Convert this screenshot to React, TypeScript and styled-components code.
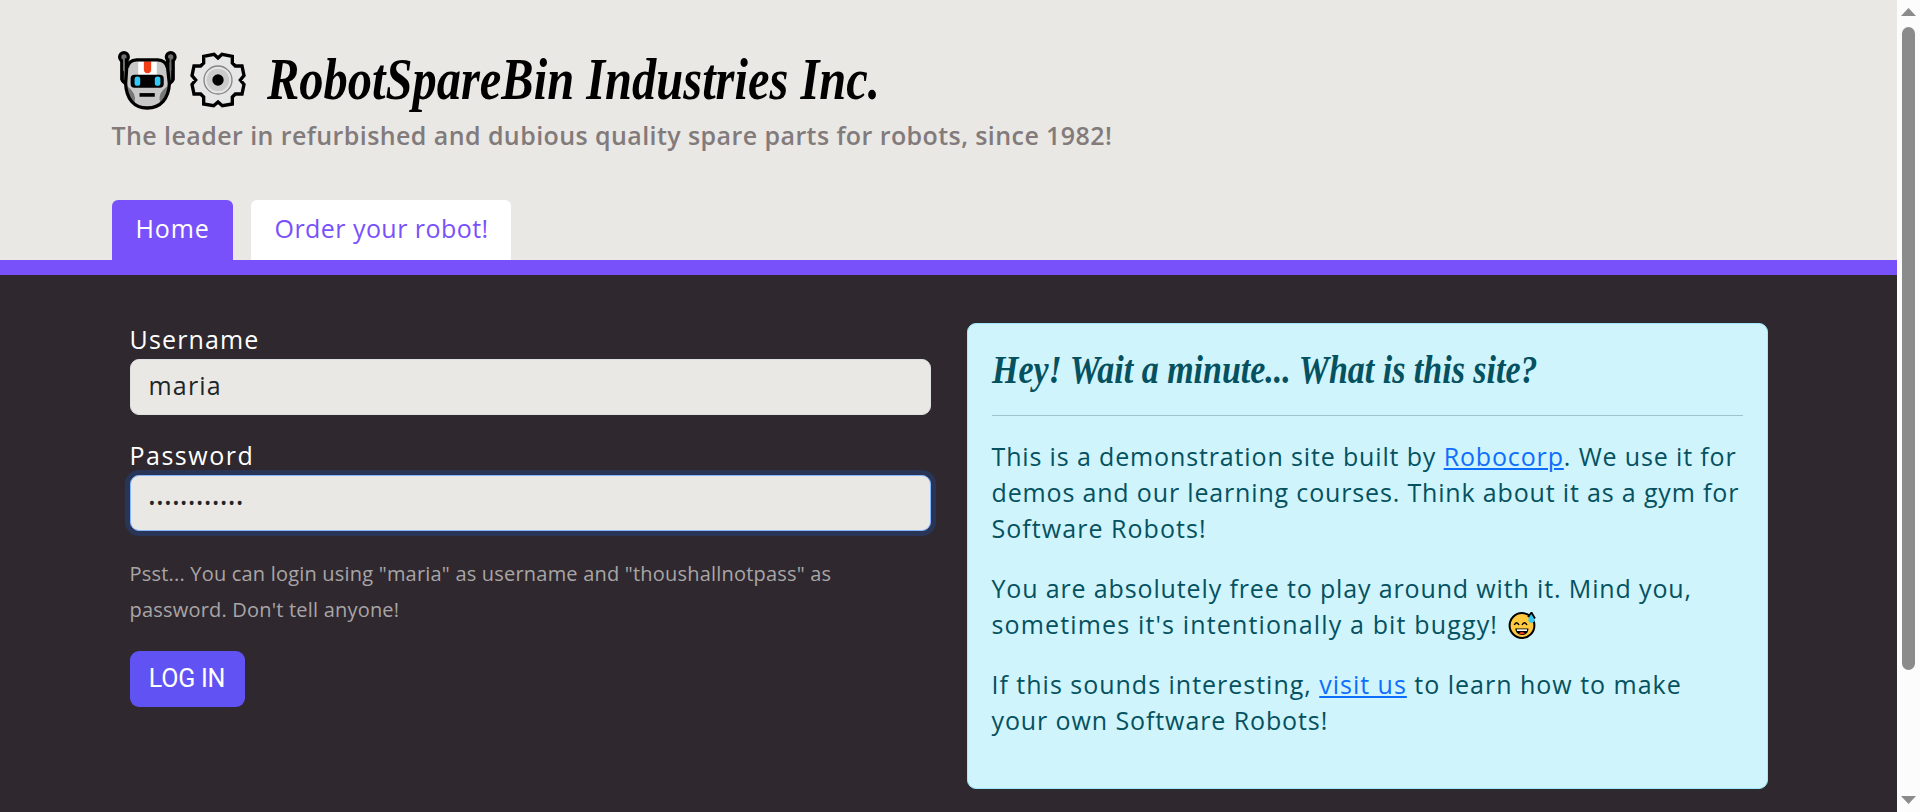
import React from "react";
import styled, { createGlobalStyle } from "styled-components";

const GlobalStyle = createGlobalStyle`
  *, *::before, *::after { box-sizing: border-box; }
  body {
    margin: 0;
    overflow: hidden;
    background: #2f282e;
    font-family: "Open Sans", "Noto Sans", sans-serif;
    font-size: 25px;
    line-height: 36px;
  }
`;

const Window = styled.div`
  display: grid;
  grid-template-columns: 1fr 23px;
  height: 812px;
  overflow: hidden;
`;

const Page = styled.div`
  background: #2f282e;
`;

const Container = styled.div`
  width: 1674px;
  margin: 0 auto;
`;

const Header = styled.header`
  height: 275px;
  padding-top: 50px;
  background: #e9e8e4;
  border-bottom: 15px solid #7851fb;
`;

const Brand = styled.div`
  display: flex;
  align-items: center;
  height: 60px;
  padding-left: 6px;

  svg { flex: none; }
  svg + svg { margin-left: 13px; }
`;

const Title = styled.h1`
  margin: -3px 0 0 21px;
  font: italic 700 60px/60px "Liberation Serif", serif;
  color: #000;
  white-space: nowrap;
  transform: scaleX(0.808);
  transform-origin: left center;
`;

const Tagline = styled.p<{ $spacing: number }>`
  margin: 7px 0 47px;
  font-weight: 600;
  color: #827a7b;
  white-space: nowrap;
  letter-spacing: ${(p) => p.$spacing}px;
`;

const Tabs = styled.nav`
  display: flex;
  gap: 18px;
`;

const Tab = styled.a<{ $active?: boolean; $width: number; $spacing: number }>`
  display: flex;
  align-items: center;
  width: ${(p) => p.$width}px;
  height: 60px;
  padding: 0 0 4px 24px;
  border-radius: 6px 6px 0 0;
  background: ${(p) => (p.$active ? "#7851fb" : "#fff")};
  color: ${(p) => (p.$active ? "#fff" : "#7851fb")};
  letter-spacing: ${(p) => p.$spacing}px;
  white-space: nowrap;
`;

const Main = styled(Container).attrs({ as: "main" })`
  display: grid;
  grid-template-columns: 801px 801px;
  gap: 36px;
  padding: 48px 18px 0;
  align-items: start;
`;

const Form = styled.form`
  display: flex;
  flex-direction: column;
  align-items: flex-start;
  gap: 24px;
`;

const Field = styled.div`
  width: 100%;
`;

const Label = styled.label<{ $spacing: number }>`
  display: block;
  height: 36px;
  line-height: 32px;
  color: #fff;
  letter-spacing: ${(p) => p.$spacing}px;
`;

const Input = styled.input<{ $focused?: boolean }>`
  display: block;
  width: 100%;
  height: 56px;
  padding: 7px 18px 11px;
  border: 1px solid ${(p) => (p.$focused ? "#86b7fe" : "#dfe0e0")};
  border-radius: 9px;
  outline: none;
  background: #e9e8e4;
  box-shadow: ${(p) => (p.$focused ? "0 0 0 5px #283556" : "none")};
  color: #212529;
  font: 400 25px "Open Sans", sans-serif;
  letter-spacing: 1.2px;

  &[type="password"] {
    padding: 9px 18px 10px;
    font-size: 18px;
    letter-spacing: 1.2px;
  }
`;

const Hint = styled.p`
  margin: 0;
  padding-top: 1px;
  margin-bottom: -1px;
  color: #a9a5a7;
  font-size: 20px;
  white-space: nowrap;
  letter-spacing: 0.2px;
`;

const Button = styled.button`
  width: 115px;
  height: 56px;
  padding: 0 0 2px;
  border: 0;
  border-radius: 9px;
  background: #6153f3;
  color: #fff;
  font: 400 25px Roboto, sans-serif;
  letter-spacing: -0.2px;
  white-space: nowrap;
`;

const Alert = styled.section`
  height: 466px;
  padding: 24px;
  border: 1px solid #9eeaf9;
  border-radius: 9px;
  background: #cff4fc;
  color: #055160;
`;

const AlertTitle = styled.h4`
  width: max-content;
  margin: 0;
  font: italic 700 39px/43px "Liberation Serif", serif;
  white-space: nowrap;
  transform: scaleX(0.871);
  transform-origin: left center;
`;

const Rule = styled.hr`
  height: 1px;
  margin: 24px 0 22px;
  border: 0;
  background: #9dc5cd;
`;

const Paragraph = styled.p`
  margin: 0 0 24px;
`;

const Line = styled.span<{ $spacing: number }>`
  display: block;
  height: 36px;
  white-space: nowrap;
  letter-spacing: ${(p) => p.$spacing}px;

  svg {
    margin-left: 2px;
    vertical-align: -5px;
  }
`;

const Link = styled.a`
  color: #0d6efd;
  text-decoration: underline;
  text-decoration-thickness: 2px;
  text-underline-offset: 2px;
`;

const Scrollbar = styled.div`
  display: flex;
  flex-direction: column;
  align-items: center;
  padding: 8px 0;
  background: #fcfcfc;
`;

const Thumb = styled.div`
  width: 13px;
  height: 643px;
  margin: 11px 0 auto;
  border-radius: 7px;
  background: #8b8b8b;
`;

const Arrow = styled.svg`
  display: block;
  flex: none;
  width: 15px;
  height: 8px;
  fill: #8b8b8b;
`;

const RobotIcon = () => (
  <svg width="59" height="59" viewBox="0 0 178 178">
    <path d="M19 8C8 8 4 20 10 29V86Q12 92 24 98L34 38L29 22Q27 8 19 8Z" fill="#707070" />
    <path d="M159 8C170 8 174 20 168 29V86Q166 92 154 98L144 38L149 22Q151 8 159 8Z" fill="#707070" />
    <path d="M12 29V86Q13 91 22 97M166 29V86Q165 91 156 97" fill="none" stroke="#000" strokeWidth="11" />
    <circle cx="18" cy="18" r="13" fill="#707070" stroke="#000" strokeWidth="10" />
    <circle cx="159" cy="18" r="13" fill="#707070" stroke="#000" strokeWidth="10" />
    <path d="M15 22H21V60H15ZM155 22H161V60H155Z" fill="#707070" />
    <path d="M27 54Q30 29 56 27H120Q147 29 150 54L155 98C153 143 129 172 88 172C48 172 25 144 22 98Z" fill="#c8c8c8" />
    <path d="M28 98V120Q33 142 50 154Q57 128 28 106ZM149 98V120Q144 142 127 154Q118 128 149 106Z" fill="#777" />
    <path d="M61 31H117V72H61Z" fill="#fff" />
    <path d="M78 31H100V56Q100 67 89 67Q78 67 78 56Z" fill="#f03e17" />
    <path d="M26 22V54L23 98C25 144 48 172 88 172C129 172 153 143 155 98L150 54V22M28 50Q32 28 56 27H120Q144 28 149 50" fill="none" stroke="#000" strokeWidth="10" strokeLinejoin="round" />
    <rect x="38" y="72" width="100" height="39" rx="12" />
    <rect x="50" y="77" width="17" height="28" rx="8" fill="#31c9f8" />
    <rect x="111" y="77" width="17" height="28" rx="8" fill="#31c9f8" />
    <rect x="65" y="127" width="46" height="11" />
  </svg>
);

const GearIcon = () => (
  <svg width="56" height="56" viewBox="0 0 168 168">
    <path
      d="M72 7L84 18L96 7L127 13V33L136 42H156L162 71L151 84L162 97L156 126H136L127 135V156L97 161L84 150L71 161L41 156V135L32 126H12L6 97L17 84L6 71L12 42H32L41 33V13Z"
      fill="#e6e6e6"
      stroke="#000"
      strokeWidth="10"
    />
    <circle cx="84" cy="84" r="42" fill="#e6e6e6" stroke="#858585" strokeWidth="4" />
    <circle cx="84" cy="84" r="34" fill="#cbcbcb" />
    <circle cx="84" cy="84" r="17" />
  </svg>
);

const SweatSmile = () => (
  <svg width="28" height="27" viewBox="0 0 28 27">
    <circle cx="14" cy="13.5" r="12.4" fill="#ffc83d" stroke="#000" strokeWidth="2" />
    <path d="M6.3 13Q8.5 8.5 11 13M14 13Q16.5 8.5 19 13" fill="none" stroke="#000" strokeWidth="1.5" />
    <path d="M7.2 16.5H20.5Q20 23 14 23Q8 23 7.2 16.5Z" fill="#000" />
    <path d="M8.8 17.3H19V19H8.8Z" fill="#fff" />
    <path d="M10.8 21.5Q14 18.6 17 21.5Q14 23 10.8 21.5Z" fill="#f03e17" />
    <path d="M23.5 1.5Q19.8 6 20.5 9Q22.5 12.5 26 9.8Q28 7 23.5 1.5Z" fill="#31c9f8" />
    <path d="M20 5L23.5 0.5L27 6.5" fill="none" stroke="#000" strokeWidth="1.8" />
  </svg>
);

export default function App() {
  return (
    <Window>
      <GlobalStyle />
      <Page>
        <Header>
          <Container>
            <Brand>
              <RobotIcon />
              <GearIcon />
              <Title>RobotSpareBin Industries Inc.</Title>
            </Brand>
            <Tagline $spacing={0.42}>
              The leader in refurbished and dubious quality spare parts for robots, since 1982!
            </Tagline>
            <Tabs>
              <Tab $active $width={121} $spacing={0.9}>Home</Tab>
              <Tab $width={260} $spacing={0.45}>Order your robot!</Tab>
            </Tabs>
          </Container>
        </Header>
        <Main>
          <Form>
            <Field>
              <Label htmlFor="username" $spacing={1.15}>Username</Label>
              <Input id="username" type="text" defaultValue="maria" />
            </Field>
            <Field>
              <Label htmlFor="password" $spacing={1.5}>Password</Label>
              <Input id="password" type="password" defaultValue="thoushallnot" $focused />
            </Field>
            <Hint>
              Psst... You can login using "maria" as username and "thoushallnotpass" as
              <br />
              password. Don't tell anyone!
            </Hint>
            <Button type="button">LOG IN</Button>
          </Form>
          <Alert>
            <AlertTitle>Hey! Wait a minute... What is this site?</AlertTitle>
            <Rule />
            <Paragraph>
              <Line $spacing={0.86}>
                This is a demonstration site built by <Link>Robocorp</Link>. We use it for
              </Line>
              <Line $spacing={0.84}>demos and our learning courses. Think about it as a gym for</Line>
              <Line $spacing={1.05}>Software Robots!</Line>
            </Paragraph>
            <Paragraph>
              <Line $spacing={0.86}>You are absolutely free to play around with it. Mind you,</Line>
              <Line $spacing={1.15}>
                sometimes it's intentionally a bit buggy! <SweatSmile />
              </Line>
            </Paragraph>
            <Paragraph>
              <Line $spacing={0.99}>
                If this sounds interesting, <Link>visit us</Link> to learn how to make
              </Line>
              <Line $spacing={0.9}>your own Software Robots!</Line>
            </Paragraph>
          </Alert>
        </Main>
      </Page>
      <Scrollbar>
        <Arrow viewBox="0 0 15 8"><path d="M7.5 0L15 8H0Z" /></Arrow>
        <Thumb />
        <Arrow viewBox="0 0 15 8"><path d="M0 0H15L7.5 8Z" /></Arrow>
      </Scrollbar>
    </Window>
  );
}
